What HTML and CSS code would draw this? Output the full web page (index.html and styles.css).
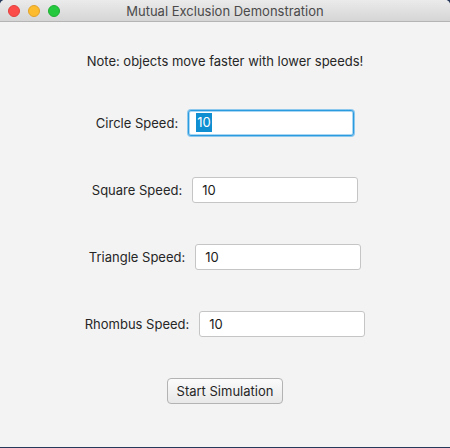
FILE: index.html
```html
<!DOCTYPE html>
<html>
<head>
<meta charset="utf-8">
<link rel="stylesheet" href="styles.css">
</head>
<body>
<div class="window">
  <div class="titlebar">
    <div class="lights">
      <span class="light red"></span>
      <span class="light yellow"></span>
      <span class="light green"></span>
    </div>
    <div class="title">Mutual Exclusion Demonstration</div>
  </div>
  <div class="content">
    <div class="note">Note: objects move faster with lower speeds!</div>
    <div class="row">
      <label class="label">Circle Speed:</label>
      <div class="field focused"><span class="sel">10</span></div>
    </div>
    <div class="row">
      <label class="label">Square Speed:</label>
      <div class="field">10</div>
    </div>
    <div class="row">
      <label class="label">Triangle Speed:</label>
      <div class="field">10</div>
    </div>
    <div class="row">
      <label class="label">Rhombus Speed:</label>
      <div class="field">10</div>
    </div>
    <div class="row">
      <button class="btn">Start Simulation</button>
    </div>
  </div>
</div>
</body>
</html>
```
FILE: styles.css
```css
html, body {
  margin: 0;
  padding: 0;
  background: #27395a;
  height: 448px;
  overflow: hidden;
}
body {
  font-family: Inter, "Liberation Sans", sans-serif;
  font-size: 13px;
  color: #262626;
}
.window {
  height: 447px;
  background: #f3f3f3;
  border-radius: 5px 5px 0 0;
  overflow: hidden;
  display: flex;
  flex-direction: column;
}
.titlebar {
  height: 21px;
  border-bottom: 1px solid #b4b4b4;
  background: linear-gradient(#ebebeb, #d5d5d5);
  position: relative;
  display: flex;
  align-items: center;
  justify-content: center;
}
.lights {
  position: absolute;
  left: 8px;
  top: 5px;
  display: flex;
  gap: 8px;
}
.light {
  width: 12px;
  height: 12px;
  border-radius: 50%;
  box-sizing: border-box;
}
.red { background: #fc4c4a; border: 0.5px solid #e0403d; }
.yellow { background: #fdbb2e; border: 0.5px solid #e0a22a; }
.green { background: #24c93d; border: 0.5px solid #1fae33; }
.title {
  color: #4a4a4a;
  font-size: 13px;
  line-height: 16px;
}
.content {
  display: flex;
  flex-direction: column;
  align-items: center;
  padding-top: 31px;
  gap: 40px;
}
.note {
  line-height: 16px;
  height: 16px;
}
.row {
  height: 27px;
  display: flex;
  align-items: center;
  justify-content: center;
  gap: 10px;
}
.label {
  line-height: 16px;
}
.field {
  width: 166px;
  height: 26px;
  box-sizing: border-box;
  background: #fff;
  border: 1px solid #c5c5c5;
  border-radius: 3px;
  padding: 0 9px;
  line-height: 24px;
  font-size: 13px;
  color: #1a1a1a;
}
.field.focused {
  border: 1px solid #2b9be0;
  box-shadow: 0 0 0 1px #8cc8ee, inset 0 0 0 1px #a9d6f3;
  padding-left: 7px;
}
.sel {
  background: #0f8fd1;
  color: #fff;
  display: inline-block;
  line-height: 19px;
  padding: 0 1px;
  vertical-align: middle;
  margin-top: -3px;
}
.btn {
  width: 116px;
  height: 26px;
  font-family: Inter, "Liberation Sans", sans-serif;
  font-size: 13px;
  color: #262626;
  background: linear-gradient(#fbfbfb, #e8e8e8);
  border: 1px solid #b3b3b3;
  border-radius: 4px;
  padding: 0;
}
```
